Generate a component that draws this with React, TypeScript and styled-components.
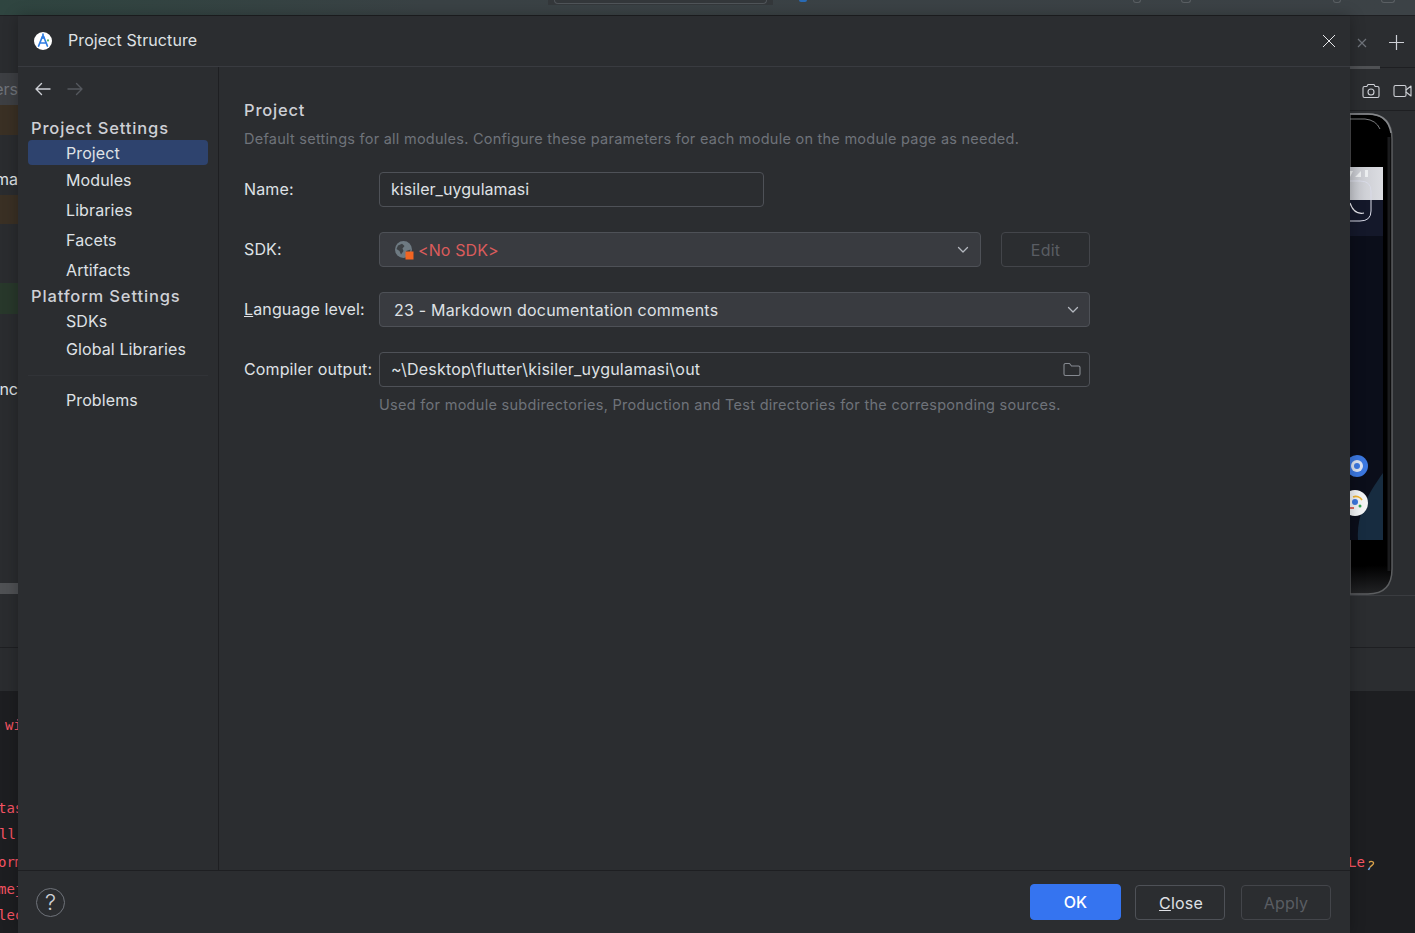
import React from "react";
import styled, { createGlobalStyle } from "styled-components";

const Global = createGlobalStyle`
  html, body { margin: 0; padding: 0; height: 100%; background: #2b2d30; overflow: hidden; }
  body { font-family: Inter, "Noto Sans", sans-serif; color: #dfe1e5; }
  * { box-sizing: border-box; }
`;

const Page = styled.div`
  display: grid;
  grid-template-columns: 18px 1332px 65px;
  grid-template-rows: 16px 917px;
  width: 1415px;
  height: 933px;
  overflow: hidden;
`;

const TopBar = styled.div`
  grid-column: 1 / 4;
  display: flex;
  align-items: flex-start;
  padding-left: 548px;
  background: linear-gradient(90deg, #2f4540 0%, #3a4245 30%, #3c4246 100%);
  border-bottom: 1px solid #1e1f22;
`;

const TopSearch = styled.div`
  width: 225px;
  height: 5px;
  padding: 0 6px;
  background: #34383b;
`;

const TopSearchInner = styled.div`
  height: 4px;
  border: 1px solid #50555a;
  border-top: 0;
  border-radius: 0 0 4px 4px;
`;

const TopDot = styled.div`
  width: 8px;
  height: 2px;
  margin-left: 26px;
  border-radius: 0 0 4px 4px;
  background: #2a6bb5;
`;

const TopIcon = styled.div<{ $ml: number; $w: number }>`
  width: ${(p) => p.$w}px;
  height: 3px;
  margin-left: ${(p) => p.$ml}px;
  border: 1px solid #5a5f63;
  border-top: 0;
  border-radius: 0 0 4px 4px;
`;

const LeftStrip = styled.div`
  display: flex;
  flex-direction: column;
  background: #2a2c2f;
  overflow: hidden;
`;

const StripRow = styled.div<{ $h: number; $bg?: string; $color?: string; $pb?: number }>`
  flex: 0 0 ${(p) => p.$h}px;
  display: flex;
  align-items: center;
  justify-content: flex-end;
  padding-bottom: ${(p) => p.$pb ?? 0}px;
  white-space: nowrap;
  font-size: 16px;
  color: ${(p) => p.$color ?? "#dfe1e5"};
  background: ${(p) => p.$bg ?? "transparent"};
`;

const HLine = styled.div`
  flex: 0 0 1px;
  background: #1e1f22;
`;

const Editor = styled.div`
  flex: 1;
  min-height: 0;
  background: #1d1e21;
  overflow: hidden;
`;

const LeftEditor = styled(Editor)`
  padding-top: 21px;
`;

const CodeLine = styled.div<{ $mt?: number; $ml?: number }>`
  height: 26px;
  margin-top: ${(p) => p.$mt ?? 0}px;
  margin-left: ${(p) => p.$ml ?? 0}px;
  line-height: 26px;
  font-family: "DejaVu Sans Mono", "Liberation Mono", monospace;
  font-size: 14px;
  color: #f75464;
  white-space: nowrap;
`;

const Dialog = styled.div`
  display: flex;
  flex-direction: column;
  background: #2b2d30;
  box-shadow: 0 0 14px rgba(0, 0, 0, 0.28);
  z-index: 1;
  min-height: 0;
`;

const Header = styled.header`
  flex: 0 0 51px;
  display: flex;
  align-items: center;
  gap: 15px;
  padding: 0 14px 1px 15px;
  border-bottom: 1px solid #393b40;
`;

const Title = styled.div`
  flex: 1;
  padding-bottom: 2px;
  font-size: 16px;
  letter-spacing: 0.1px;
  color: #dfe1e5;
`;

const Body = styled.div`
  flex: 1;
  display: flex;
  min-height: 0;
`;

const Sidebar = styled.nav`
  flex: 0 0 201px;
  display: flex;
  flex-direction: column;
  padding: 0 10px;
  border-right: 1px solid #1e1f22;
`;

const NavArrows = styled.div`
  flex: 0 0 43px;
  display: flex;
  align-items: center;
  gap: 14px;
  padding: 0 0 0 6px;
`;

const Group = styled.div<{ $h: number; $pt?: number; $pb?: number }>`
  flex: 0 0 ${(p) => p.$h}px;
  display: flex;
  align-items: center;
  padding: ${(p) => p.$pt ?? 0}px 0 ${(p) => p.$pb ?? 0}px 3px;
  font-size: 16.5px;
  font-weight: 500;
  letter-spacing: 0.85px;
  color: #ced0d6;
  white-space: nowrap;
`;

const Item = styled.div<{ $h: number; $active?: boolean }>`
  flex: 0 0 ${(p) => p.$h}px;
  display: flex;
  align-items: center;
  padding-left: 38px;
  font-size: 16px;
  letter-spacing: 0.1px;
  color: #dfe1e5;
  border-radius: 4px;
  background: ${(p) => (p.$active ? "#2e436e" : "transparent")};
`;

const Divider = styled.div`
  flex: 0 0 1px;
  margin: 12px 0 11px 0;
  background: #313337;
`;

const Main = styled.main`
  flex: 1;
  padding: 32px 0 0 25px;
`;

const Heading = styled.h2`
  margin: 0;
  height: 22px;
  line-height: 22px;
  font-size: 16.5px;
  font-weight: 500;
  letter-spacing: 0.8px;
  color: #ced0d6;
`;

const Muted = styled.p`
  margin: 0;
  height: 20px;
  line-height: 20px;
  font-size: 14.5px;
  letter-spacing: 0.25px;
  color: #6f737a;
  white-space: nowrap;
`;

const Description = styled(Muted)`
  margin-top: 8px;
`;

const Form = styled.div`
  display: grid;
  grid-template-columns: 135px 711px;
  row-gap: 25px;
  align-items: center;
  margin-top: 23px;
`;

const Label = styled.label`
  padding-bottom: 2px;
  font-size: 16px;
  letter-spacing: 0.13px;
  color: #dfe1e5;
  white-space: nowrap;
`;

const Field = styled.div<{ $w?: number; $filled?: boolean; $pl?: number; $pr?: number }>`
  display: flex;
  align-items: center;
  flex: ${(p) => (p.$w ? "none" : "1")};
  width: ${(p) => (p.$w ? `${p.$w}px` : "auto")};
  height: 35px;
  padding: 0 ${(p) => p.$pr ?? 10}px 0 ${(p) => p.$pl ?? 11}px;
  font-size: 16px;
  color: #dfe1e5;
  border: 1px solid #4e5157;
  border-radius: 4px;
  background: ${(p) => (p.$filled ? "#393b40" : "transparent")};
  min-width: 0;
`;

const FieldText = styled.span<{ $error?: boolean; $ls?: number; $pb?: number }>`
  flex: 1;
  padding-bottom: ${(p) => p.$pb ?? 0}px;
  letter-spacing: ${(p) => p.$ls ?? 0.2}px;
  color: ${(p) => (p.$error ? "#db5c5c" : "#dfe1e5")};
  white-space: nowrap;
`;

const SdkRow = styled.div`
  display: flex;
  gap: 20px;
`;

const GlobeWrap = styled.span`
  display: flex;
  margin-right: 4px;
`;

const Hint = styled(Muted)`
  grid-column: 2;
  margin-top: -17px;
  letter-spacing: 0.29px;
`;

const Footer = styled.footer`
  flex: 0 0 63px;
  display: flex;
  align-items: center;
  padding: 0 19px 0 18px;
  border-top: 1px solid #1e1f22;
`;

const Help = styled.div`
  display: flex;
  align-items: center;
  justify-content: center;
  width: 29px;
  height: 29px;
  margin-right: auto;
  border: 1px solid #6f737a;
  border-radius: 50%;
  font-size: 22px;
  font-weight: 300;
  color: #ced0d6;
`;

const Button = styled.button<{ $variant?: "primary" | "disabled" }>`
  width: ${(p) => (p.$variant === "primary" ? 91 : 90)}px;
  height: ${(p) => (p.$variant === "primary" ? 36 : 35)}px;
  margin-top: ${(p) => (p.$variant === "primary" ? 0 : 1)}px;
  margin-left: ${(p) => (p.$variant === "disabled" ? 16 : 0)}px;
  margin-right: ${(p) => (p.$variant === "primary" ? 14 : 0)}px;
  padding: 0 ${(p) => (p.$variant ? 0 : 0)}px 0 ${(p) => (p.$variant ? 0 : 2)}px;
  font-family: inherit;
  font-size: 16px;
  font-weight: ${(p) => (p.$variant === "primary" ? 500 : 400)};
  letter-spacing: 0.2px;
  border-radius: 4px;
  color: ${(p) => (p.$variant === "primary" ? "#ffffff" : p.$variant === "disabled" ? "#5a5d63" : "#dfe1e5")};
  background: ${(p) => (p.$variant === "primary" ? "#3574f0" : "transparent")};
  border: 1px solid ${(p) => (p.$variant === "primary" ? "#3574f0" : p.$variant === "disabled" ? "#43454a" : "#4e5157")};
`;

const EditButton = styled(Button)`
  flex: 0 0 89px;
  width: 89px;
  height: 35px;
  margin: 0;
`;

const RightStrip = styled.div`
  display: flex;
  flex-direction: column;
  background: #2b2d30;
  overflow: hidden;
`;

const RightTabs = styled.div`
  flex: 0 0 50px;
  display: flex;
  align-items: center;
  gap: 21px;
  padding: 3px 0 0 7px;
  background: #2b2d30;
`;

const Rule = styled.div`
  flex: 0 0 3px;
  padding: 1px 0;
  background: #1e1f22;
  background-clip: content-box;
  position: relative;
`;

const RuleThumb = styled.div`
  position: absolute;
  top: 0;
  left: 0;
  width: 30px;
  height: 3px;
  background: #4f5154;
`;

const Tools = styled.div`
  flex: 0 0 42px;
  display: flex;
  align-items: center;
  gap: 13px;
  padding: 2px 0 0 12px;
  border-bottom: 1px solid #1e1f22;
`;

const DeviceArea = styled.div`
  flex: 0 0 485px;
  padding-top: 2px;
  border-bottom: 1px solid #3a3c40;
  overflow: hidden;
`;

const RightEditor = styled(Editor)`
  padding-top: 158px;
  display: flex;
  align-items: flex-start;
`;

const RightCode = styled(CodeLine)`
  margin-left: -2px;
`;

const MarkWrap = styled.span`
  display: flex;
  margin: 11px 0 0 1px;
`;

const Spacer = styled.div<{ $h: number }>`
  flex: 0 0 ${(p) => p.$h}px;
`;

const Stroke = { fill: "none", strokeLinecap: "round", strokeLinejoin: "round" } as const;

const Logo = () => (
  <svg width="20" height="20" viewBox="0 0 20 20">
    <circle cx="10" cy="10" r="9" fill="#fff" />
    <path d="M10 3.2v2.4M8.7 7.2 5.6 15M11.3 7.2 14.4 15M6.8 12h6.4" stroke="#2f7de1" strokeWidth="1.7" {...Stroke} />
    <circle cx="10" cy="6.3" r="1.8" fill="#2f7de1" />
    <circle cx="15" cy="9.4" r="1.1" fill="#57b36b" />
  </svg>
);

const Close = () => (
  <svg width="14" height="14" viewBox="0 0 14 14">
    <path d="M1 1 13 13M13 1 1 13" stroke="#e6e7ea" strokeWidth="1" fill="none" />
  </svg>
);

const Arrow = ({ color, flip }: { color: string; flip?: boolean }) => (
  <svg width="18" height="14" viewBox="0 0 18 14" style={flip ? { transform: "scaleX(-1)" } : undefined}>
    <path d="M16 7H2M7.5 1.5 2 7l5.5 5.5" stroke={color} strokeWidth="1.4" {...Stroke} />
  </svg>
);

const Chevron = () => (
  <svg width="12" height="8" viewBox="0 0 12 8">
    <path d="M1.5 1.5 6 6l4.5-4.5" stroke="#b4b8bf" strokeWidth="1.3" {...Stroke} />
  </svg>
);

const Globe = () => (
  <svg width="20" height="20" viewBox="0 0 20 20">
    <circle cx="9.5" cy="9.5" r="8.5" fill="#6e7a82" />
    <path d="M4 5.5 8 3.8 10.5 6 8.5 8.5 9.5 11 7 14.5 5.5 11 2.5 9ZM12 11l4.5-1.5-.8 4L12.8 16Z" fill="#3d4145" />
    <rect x="11.5" y="11.5" width="8" height="8" fill="#f26522" />
  </svg>
);

const Folder = () => (
  <svg width="18" height="15" viewBox="0 0 18 15">
    <path d="M1 3a1.5 1.5 0 0 1 1.5-1.5h4L8.5 4h7A1.5 1.5 0 0 1 17 5.5V12a1.5 1.5 0 0 1-1.5 1.5h-13A1.5 1.5 0 0 1 1 12Z" stroke="#868a91" strokeWidth="1.1" {...Stroke} />
  </svg>
);

const Camera = () => (
  <svg width="18" height="16" viewBox="0 0 18 16">
    <path d="M1 5a1.5 1.5 0 0 1 1.5-1.5h2.3L6 1.5h6l1.2 2h2.3A1.5 1.5 0 0 1 17 5v8a1.5 1.5 0 0 1-1.5 1.5h-13A1.5 1.5 0 0 1 1 13Z" stroke="#ced0d6" strokeWidth="1.1" {...Stroke} />
    <circle cx="9" cy="9" r="3" stroke="#ced0d6" strokeWidth="1.1" fill="none" />
  </svg>
);

const Video = () => (
  <svg width="19" height="14" viewBox="0 0 19 14">
    <rect x="1" y="1.5" width="12" height="11" rx="1.5" stroke="#ced0d6" strokeWidth="1.1" fill="none" />
    <path d="M13 6 18 2v10l-5-4" stroke="#ced0d6" strokeWidth="1.1" {...Stroke} />
  </svg>
);

const SmallX = () => (
  <svg width="10" height="10" viewBox="0 0 10 10">
    <path d="M1 1 9 9M9 1 1 9" stroke="#6f737a" strokeWidth="1.2" />
  </svg>
);

const Plus = () => (
  <svg width="17" height="17" viewBox="0 0 17 17">
    <path d="M8.5 1v15M1 8.5h15" stroke="#ced0d6" strokeWidth="1.2" />
  </svg>
);

const Phone = () => (
  <svg width="65" height="482" viewBox="0 0 65 482">
    <defs>
      <linearGradient id="phoneBottom" x1="0" y1="0" x2="0" y2="1">
        <stop offset="0" stopColor="#000" />
        <stop offset="0.94" stopColor="#000" />
        <stop offset="1" stopColor="#222325" />
      </linearGradient>
      <linearGradient id="statusBg" x1="0" y1="0" x2="1" y2="0">
        <stop offset="0" stopColor="#c4c6cc" />
        <stop offset="1" stopColor="#dcdde2" />
      </linearGradient>
    </defs>
    <path d="M0 1H18Q42 1 42 26V456Q42 481 18 481H0Z" fill="url(#phoneBottom)" stroke="#5c5e60" strokeWidth="1.5" />
    <path d="M39 24V458" stroke="#1a1b1d" strokeWidth="3" fill="none" />
    <path d="M0 1H18Q38 1 41 20" fill="none" stroke="#85878a" strokeWidth="1.5" />
    <path d="M0 6H15Q26 7 30 16" fill="none" stroke="#9a9ca0" strokeWidth="0.8" />
    <rect x="0" y="54" width="33" height="373" fill="#0b0e1a" />
    <rect x="0" y="54" width="33" height="33" fill="url(#statusBg)" />
    <rect x="0" y="87" width="33" height="36" fill="#14182a" />
    <path d="M0 64 3 58H0ZM5 64 11 58V64ZM15 57H18V64H15Z" fill="#eceef0" />
    <path d="M0 68H10Q21 68 21 78V98Q21 108 10 108H0" fill="none" stroke="#d9dbe8" strokeWidth="1" />
    <path d="M0 90Q4 102 14 100" fill="none" stroke="#e8e8ee" strokeWidth="1.2" />
    <path d="M8 427C6 400 20 378 33 360V427Z" fill="#172c40" />
    <circle cx="7" cy="353" r="11" fill="#3c78e0" />
    <circle cx="7" cy="353" r="6" fill="#dde4f2" />
    <circle cx="7" cy="353" r="3" fill="#3c78e0" />
    <circle cx="5" cy="390" r="13" fill="#f4f5f6" />
    <path d="M3 384a7 7 0 0 1 9 3" fill="none" stroke="#f1b42f" strokeWidth="1.6" />
    <circle cx="5" cy="389" r="3" fill="#3c78e0" />
    <path d="M0 395H4" stroke="#d9483b" strokeWidth="1.6" />
    <circle cx="10" cy="393" r="1.5" fill="#34a853" />
  </svg>
);

const TinyMark = () => (
  <svg width="10" height="11" viewBox="0 0 10 11">
    <path d="M3 2.5C4.5 .8 8 1.3 7.5 3.5 7.2 5 5 5.5 3.8 7.5" stroke="#d8a24a" strokeWidth="1.3" fill="none" />
    <path d="M3.8 7.5 2.5 10" stroke="#6aa6e8" strokeWidth="1.6" fill="none" />
  </svg>
);

export default function App() {
  return (
    <Page>
      <Global />
      <TopBar>
        <TopSearch>
          <TopSearchInner />
        </TopSearch>
        <TopDot />
        <TopIcon $ml={326} $w={8} />
        <TopIcon $ml={40} $w={10} />
        <TopIcon $ml={142} $w={8} />
        <TopIcon $ml={40} $w={14} />
      </TopBar>

      <LeftStrip>
        <Spacer $h={57} />
        <StripRow $h={32} $bg="#3d3f43" $color="#6f737a">ers</StripRow>
        <StripRow $h={30} $bg="#3a3024" />
        <Spacer $h={30} />
        <StripRow $h={30} $pb={2}>ma</StripRow>
        <StripRow $h={29} $bg="#3a3024" />
        <Spacer $h={59} />
        <StripRow $h={31} $bg="#28382b" />
        <Spacer $h={61} />
        <StripRow $h={30} $pb={2}>nc</StripRow>
        <Spacer $h={178} />
        <StripRow $h={11} $bg="#4f5154" />
        <Spacer $h={53} />
        <HLine />
        <Spacer $h={43} />
        <LeftEditor>
          <CodeLine $ml={5}>wi</CodeLine>
          <CodeLine $mt={57} $ml={-2}>tas</CodeLine>
          <CodeLine $ml={-1}>ll</CodeLine>
          <CodeLine $mt={2} $ml={-2}>orm</CodeLine>
          <CodeLine $mt={1} $ml={-2}>mej</CodeLine>
          <CodeLine $ml={-2}>lec</CodeLine>
        </LeftEditor>
      </LeftStrip>

      <Dialog>
        <Header>
          <Logo />
          <Title>Project Structure</Title>
          <Close />
        </Header>
        <Body>
          <Sidebar>
            <NavArrows>
              <Arrow color="#ced0d6" />
              <Arrow color="#55585e" flip />
            </NavArrows>
            <Group $h={30} $pt={6}>Project Settings</Group>
            <Item $h={25} $active>Project</Item>
            <Item $h={30}>Modules</Item>
            <Item $h={30}>Libraries</Item>
            <Item $h={30}>Facets</Item>
            <Item $h={30}>Artifacts</Item>
            <Group $h={23} $pb={1}>Platform Settings</Group>
            <Item $h={26}>SDKs</Item>
            <Item $h={29}>Global Libraries</Item>
            <Divider />
            <Item $h={25}>Problems</Item>
          </Sidebar>
          <Main>
            <Heading>Project</Heading>
            <Description>Default settings for all modules. Configure these parameters for each module on the module page as needed.</Description>
            <Form>
              <Label>Name:</Label>
              <Field $w={385}>
                <FieldText $ls={0.06} $pb={2}>kisiler_uygulamasi</FieldText>
              </Field>
              <Label>SDK:</Label>
              <SdkRow>
                <Field $filled $pl={14} $pr={11}>
                  <GlobeWrap><Globe /></GlobeWrap>
                  <FieldText $error $ls={0.1}>&lt;No SDK&gt;</FieldText>
                  <Chevron />
                </Field>
                <EditButton $variant="disabled">Edit</EditButton>
              </SdkRow>
              <Label><u>L</u>anguage level:</Label>
              <Field $filled $pl={14}>
                <FieldText>23 - Markdown documentation comments</FieldText>
                <Chevron />
              </Field>
              <Label>Compiler output:</Label>
              <Field $pr={8}>
                <FieldText $ls={0.22} $pb={2}>~\Desktop\flutter\kisiler_uygulamasi\out</FieldText>
                <Folder />
              </Field>
              <Hint>Used for module subdirectories, Production and Test directories for the corresponding sources.</Hint>
            </Form>
          </Main>
        </Body>
        <Footer>
          <Help>?</Help>
          <Button $variant="primary">OK</Button>
          <Button><u>C</u>lose</Button>
          <Button $variant="disabled">Apply</Button>
        </Footer>
      </Dialog>

      <RightStrip>
        <RightTabs>
          <SmallX />
          <Plus />
        </RightTabs>
        <Rule><RuleThumb /></Rule>
        <Tools>
          <Camera />
          <Video />
        </Tools>
        <DeviceArea>
          <Phone />
        </DeviceArea>
        <Spacer $h={51} />
        <HLine />
        <Spacer $h={43} />
        <RightEditor>
          <RightCode>Le</RightCode>
          <MarkWrap><TinyMark /></MarkWrap>
        </RightEditor>
      </RightStrip>
    </Page>
  );
}
